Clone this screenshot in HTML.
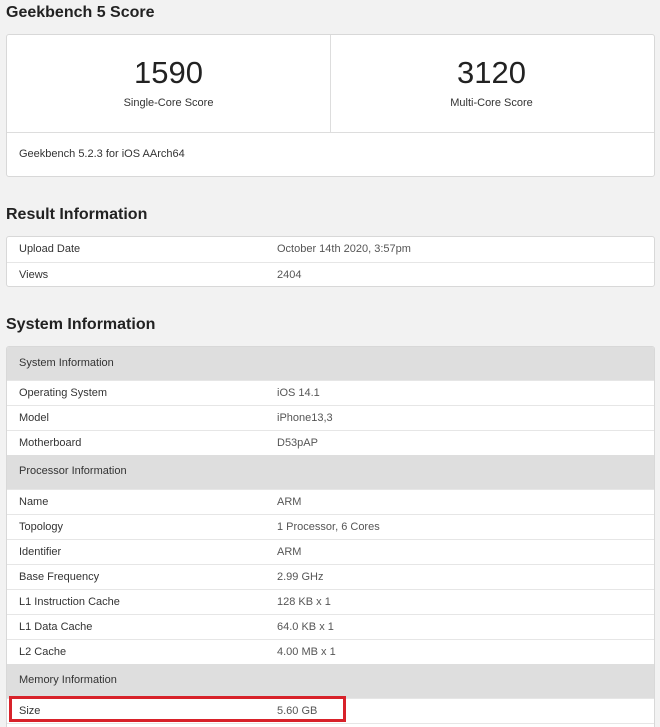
<!DOCTYPE html>
<html style="overflow:hidden;height:727px"><head><style>
body{margin:0;background:#f2f2f2;font-family:"Liberation Sans",sans-serif;color:#333;width:660px;height:727px;overflow:hidden;position:relative}
h2{position:absolute;left:6px;margin:0;font-size:16px;font-weight:bold;color:#222}
.card{position:absolute;left:6px;width:649px;background:#fff;border:1px solid #d8d8d8;border-radius:3px;box-sizing:border-box}
.row{position:absolute;left:0;right:0;height:25px;border-top:1px solid #e6e6e6;font-size:11px;line-height:25px}
.row .k{position:absolute;left:12px}
.row .v{position:absolute;left:270px;color:#555}
.hd{position:absolute;left:0;right:0;height:34px;background:#dedede;font-size:11px;line-height:32px;padding-left:12px;color:#333}
.num{position:absolute;width:323px;text-align:center;font-size:31px;top:20px;color:#222}
.lab{position:absolute;width:323px;text-align:center;font-size:11px;top:62px;color:#333}
</style></head><body>
<h2 style="top:4px">Geekbench 5 Score</h2>
<div class="card" style="top:34px;height:143px">
<div class="num" style="left:0">1590</div><div class="lab" style="left:0">Single-Core Score</div>
<div class="num" style="left:323px">3120</div><div class="lab" style="left:323px">Multi-Core Score</div>
<div style="position:absolute;left:323px;top:0;width:1px;height:97px;background:#ddd"></div>
<div style="position:absolute;left:0;right:0;top:97px;height:1px;background:#ddd"></div>
<div style="position:absolute;left:12px;top:113px;font-size:11px">Geekbench 5.2.3 for iOS AArch64</div>
</div>
<h2 style="top:206px">Result Information</h2>
<div class="card" style="top:236px;height:51px">
<div class="row" style="top:0;border-top:none"><span class="k">Upload Date</span><span class="v">October 14th 2020, 3:57pm</span></div>
<div class="row" style="top:25px"><span class="k">Views</span><span class="v">2404</span></div>
</div>
<h2 style="top:316px">System Information</h2>
<div class="card" style="top:346px;height:400px;overflow:hidden">
<div class="hd" style="top:0">System Information</div>
<div class="row" style="top:33px"><span class="k">Operating System</span><span class="v">iOS 14.1</span></div>
<div class="row" style="top:58px"><span class="k">Model</span><span class="v">iPhone13,3</span></div>
<div class="row" style="top:83px"><span class="k">Motherboard</span><span class="v">D53pAP</span></div>
<div class="hd" style="top:108px">Processor Information</div>
<div class="row" style="top:142px"><span class="k">Name</span><span class="v">ARM</span></div>
<div class="row" style="top:167px"><span class="k">Topology</span><span class="v">1 Processor, 6 Cores</span></div>
<div class="row" style="top:192px"><span class="k">Identifier</span><span class="v">ARM</span></div>
<div class="row" style="top:217px"><span class="k">Base Frequency</span><span class="v">2.99 GHz</span></div>
<div class="row" style="top:242px"><span class="k">L1 Instruction Cache</span><span class="v">128 KB x 1</span></div>
<div class="row" style="top:267px"><span class="k">L1 Data Cache</span><span class="v">64.0 KB x 1</span></div>
<div class="row" style="top:292px"><span class="k">L2 Cache</span><span class="v">4.00 MB x 1</span></div>
<div class="hd" style="top:317px">Memory Information</div>
<div class="row" style="top:351px"><span class="k">Size</span><span class="v">5.60 GB</span></div>
<div class="row" style="top:376px"></div>
</div>
<div style="position:absolute;left:9px;top:696px;width:337px;height:26px;border:3px solid #d8222a;box-sizing:border-box"></div>
</body></html>
